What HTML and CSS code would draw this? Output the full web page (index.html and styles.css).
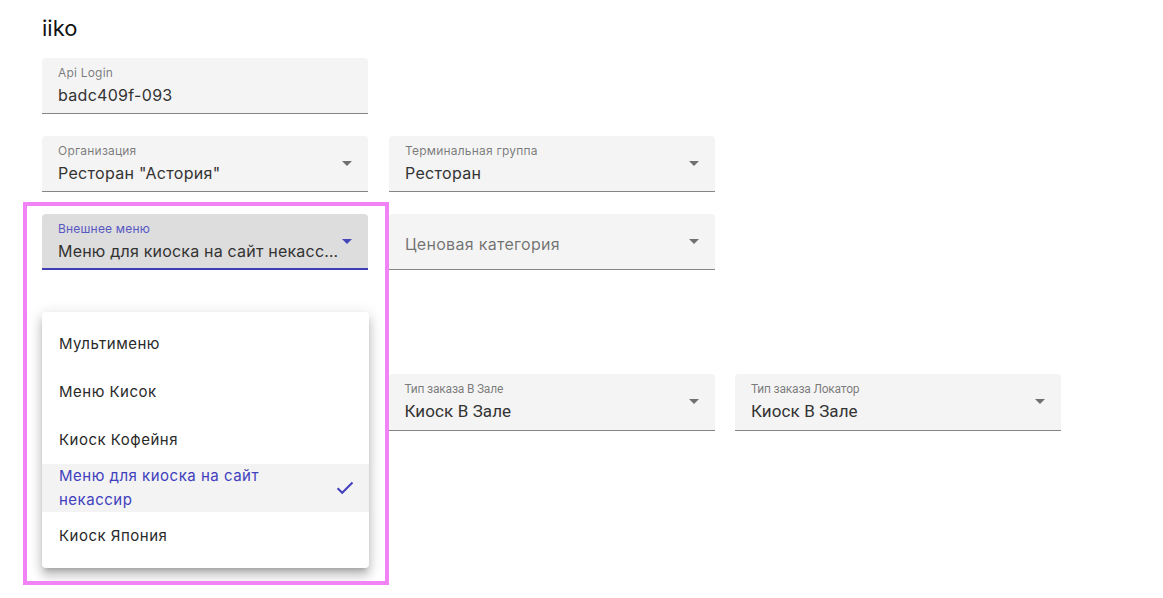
FILE: index.html
```html
<!DOCTYPE html>
<html lang="ru">
<head>
<meta charset="utf-8">
<link rel="stylesheet" href="styles.css">
</head>
<body>
<div class="page">
  <h2 class="title">iiko</h2>

  <div class="row">
    <div class="field">
      <div class="field-text">
        <div class="label">Api Login</div>
        <div class="value">badc409f-093</div>
      </div>
    </div>
  </div>

  <div class="row">
    <div class="field">
      <div class="field-text">
        <div class="label">Организация</div>
        <div class="value">Ресторан "Астория"</div>
      </div>
      <span class="arrow"></span>
    </div>
    <div class="field">
      <div class="field-text">
        <div class="label">Терминальная группа</div>
        <div class="value">Ресторан</div>
      </div>
      <span class="arrow"></span>
    </div>
  </div>

  <div class="row row-mid">
    <div class="field focused">
      <div class="field-text">
        <div class="label">Внешнее меню</div>
        <div class="value">Меню для киоска на сайт некассир</div>
      </div>
      <span class="arrow"></span>
    </div>
    <div class="field">
      <div class="field-text">
        <div class="placeholder">Ценовая категория</div>
      </div>
      <span class="arrow"></span>
    </div>
  </div>

  <div class="row row-low">
    <div class="field alt">
      <div class="field-text">
        <div class="label">Тип заказа</div>
        <div class="value">Киоск</div>
      </div>
      <span class="arrow"></span>
    </div>
    <div class="field alt">
      <div class="field-text">
        <div class="label">Тип заказа В Зале</div>
        <div class="value">Киоск В Зале</div>
      </div>
      <span class="arrow"></span>
    </div>
    <div class="field alt">
      <div class="field-text">
        <div class="label">Тип заказа Локатор</div>
        <div class="value">Киоск В Зале</div>
      </div>
      <span class="arrow"></span>
    </div>
  </div>

  <ul class="menu">
    <li class="item">Мультименю</li>
    <li class="item">Меню Кисок</li>
    <li class="item">Киоск Кофейня</li>
    <li class="item selected">
      <span class="item-text">Меню для киоска на сайт некассир</span>
      <svg class="check" width="24" height="24" viewBox="0 0 24 24"><path d="M4.6 12.2l4.6 4.6L19.5 6.5" fill="none" stroke="currentColor" stroke-width="2"/></svg>
    </li>
    <li class="item">Киоск Япония</li>
  </ul>

  <div class="highlight"></div>
</div>
</body>
</html>
```

FILE: styles.css
```css
* { box-sizing: border-box; }

body {
  margin: 0;
  background: #ffffff;
  font-family: Inter, "Noto Sans", sans-serif;
  color: #333333;
}

.page {
  position: relative;
  padding: 10px 42px 0;
  width: 1163px;
  height: 598px;
}

.title {
  margin: 0 0 12px;
  font-size: 22px;
  font-weight: 400;
  line-height: 36px;
  color: #111;
}

.row {
  display: flex;
  gap: 21px;
  margin-bottom: 22px;
}

.row-mid {
  margin-top: 1px;
}

.row-low {
  margin-top: 104px;
  gap: 21px 20.5px;
}

.row-low .field {
  height: 57px;
}

.field {
  width: 326px;
  height: 56px;
  background: #f4f4f4;
  border-radius: 4px 4px 0 0;
  border-bottom: 1px solid rgba(0, 0, 0, 0.45);
  padding: 0 16px;
  display: flex;
  align-items: flex-start;
}

.field-text {
  flex: 1;
  min-width: 0;
  padding-top: 8px;
}

.label {
  font-size: 12px;
  line-height: 14px;
  color: rgba(0, 0, 0, 0.52);
  letter-spacing: 0.2px;
}

.value {
  margin-top: 5px;
  font-size: 16px;
  line-height: 20px;
  letter-spacing: 0.3px;
  color: #333333;
  white-space: nowrap;
  overflow: hidden;
  text-overflow: ellipsis;
}

.placeholder {
  margin-top: 12px;
  font-size: 16px;
  line-height: 20px;
  letter-spacing: 0.3px;
  color: rgba(0, 0, 0, 0.55);
}

.arrow {
  flex: none;
  width: 0;
  height: 0;
  margin-top: 25px;
  border-left: 5px solid transparent;
  border-right: 5px solid transparent;
  border-top: 5px solid rgba(0, 0, 0, 0.54);
}

.field.focused {
  background: #dddddd;
  border-bottom: 2px solid #3f3fb3;
}

.field.focused .label { color: #5858c2; }
.field.focused .arrow { border-top-color: #4545b8; }
.field.focused .value { letter-spacing: 0.2px; }

.field.alt {
  font-family: Roboto, "Noto Sans", sans-serif;
}

.field.alt .label { letter-spacing: -0.2px; }
.field.alt .value { font-size: 17px; letter-spacing: 0.1px; }

.menu {
  position: absolute;
  left: 42px;
  top: 312px;
  width: 327px;
  margin: 0;
  padding: 8px 0;
  list-style: none;
  background: #ffffff;
  border-radius: 4px;
  box-shadow: 0 5px 5px -3px rgba(0,0,0,0.2), 0 8px 10px 1px rgba(0,0,0,0.14), 0 3px 14px 2px rgba(0,0,0,0.12);
}

.item {
  height: 48px;
  padding: 0 16px 0 17px;
  display: flex;
  align-items: center;
  font-size: 15px;
  line-height: 24px;
  letter-spacing: 0.5px;
  color: #2a2a2a;
}

.item.selected {
  background: #f3f3f3;
  color: #4040bd;
  justify-content: space-between;
}

.item-text {
  width: 230px;
}

.check {
  color: #4040bd;
  margin-right: -4px;
  display: block;
}

.highlight {
  position: absolute;
  left: 23px;
  top: 202px;
  width: 366px;
  height: 383px;
  border: 4px solid #f183f7;
  pointer-events: none;
}
```
